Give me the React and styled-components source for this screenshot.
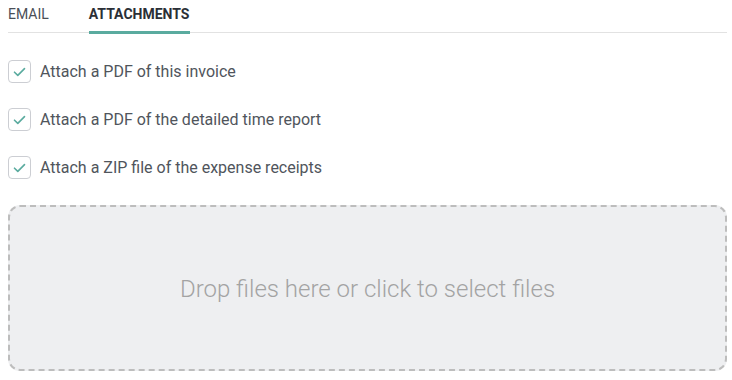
import React from "react";
import styled, { createGlobalStyle } from "styled-components";

const Global = createGlobalStyle`
  html, body { margin: 0; padding: 0; background: #fff; }
  body { font-family: Roboto, "Liberation Sans", sans-serif; color: #3c4043; }
`;

const Page = styled.div`
  padding: 0 5px 0 8px;
  display: flex;
  flex-direction: column;
`;

const Tabs = styled.div`
  display: flex;
  gap: 40px;
  border-bottom: 1px solid #e2e2e2;
  height: 33px;
  box-sizing: border-box;
`;

const Tab = styled.div`
  font-size: 14px;
  font-weight: ${(p) => (p.$active ? 700 : 400)};
  color: ${(p) => (p.$active ? "#2b2f36" : "#4a4f57")};
  padding-top: 6px;
  box-sizing: border-box;
  height: 34px;
  border-bottom: 3px solid ${(p) => (p.$active ? "#5aab9f" : "transparent")};
  padding-right: ${(p) => (p.$active ? "1px" : "0")};
`;

const Options = styled.div`
  display: flex;
  flex-direction: column;
  gap: 25px;
  padding-top: 27px;
`;

const Row = styled.label`
  display: flex;
  align-items: center;
  gap: 9px;
  font-size: 16px;
  color: #50555c;
  height: 23px;
`;

const Box = styled.span`
  width: 23px;
  height: 23px;
  box-sizing: border-box;
  border: 1px solid #ccced3;
  border-radius: 4px;
  display: flex;
  align-items: center;
  justify-content: center;
  background: #fff;
`;

const Drop = styled.div`
  margin-top: 26px;
  height: 166px;
  box-sizing: border-box;
  border: 2px dashed #bdbdbd;
  border-radius: 12px;
  background: #eeeff1;
  display: flex;
  align-items: center;
  justify-content: center;
  font-size: 24px;
  font-weight: 300;
  color: #a3a3a3;
  padding-top: 2px;
`;

const Check = () => (
  <svg width="13" height="10" viewBox="0 0 13 10" fill="none">
    <path d="M1.5 5.2 L4.8 8.4 L11.5 1.6" stroke="#5aab9f" strokeWidth="1.6" strokeLinecap="round" strokeLinejoin="round" />
  </svg>
);

const items = [
  "Attach a PDF of this invoice",
  "Attach a PDF of the detailed time report",
  "Attach a ZIP file of the expense receipts",
];

export default function App() {
  return (
    <>
      <Global />
      <Page>
        <Tabs>
          <Tab>EMAIL</Tab>
          <Tab $active>ATTACHMENTS</Tab>
        </Tabs>
        <Options>
          {items.map((t) => (
            <Row key={t}>
              <Box><Check /></Box>
              {t}
            </Row>
          ))}
        </Options>
        <Drop>Drop files here or click to select files</Drop>
      </Page>
    </>
  );
}
